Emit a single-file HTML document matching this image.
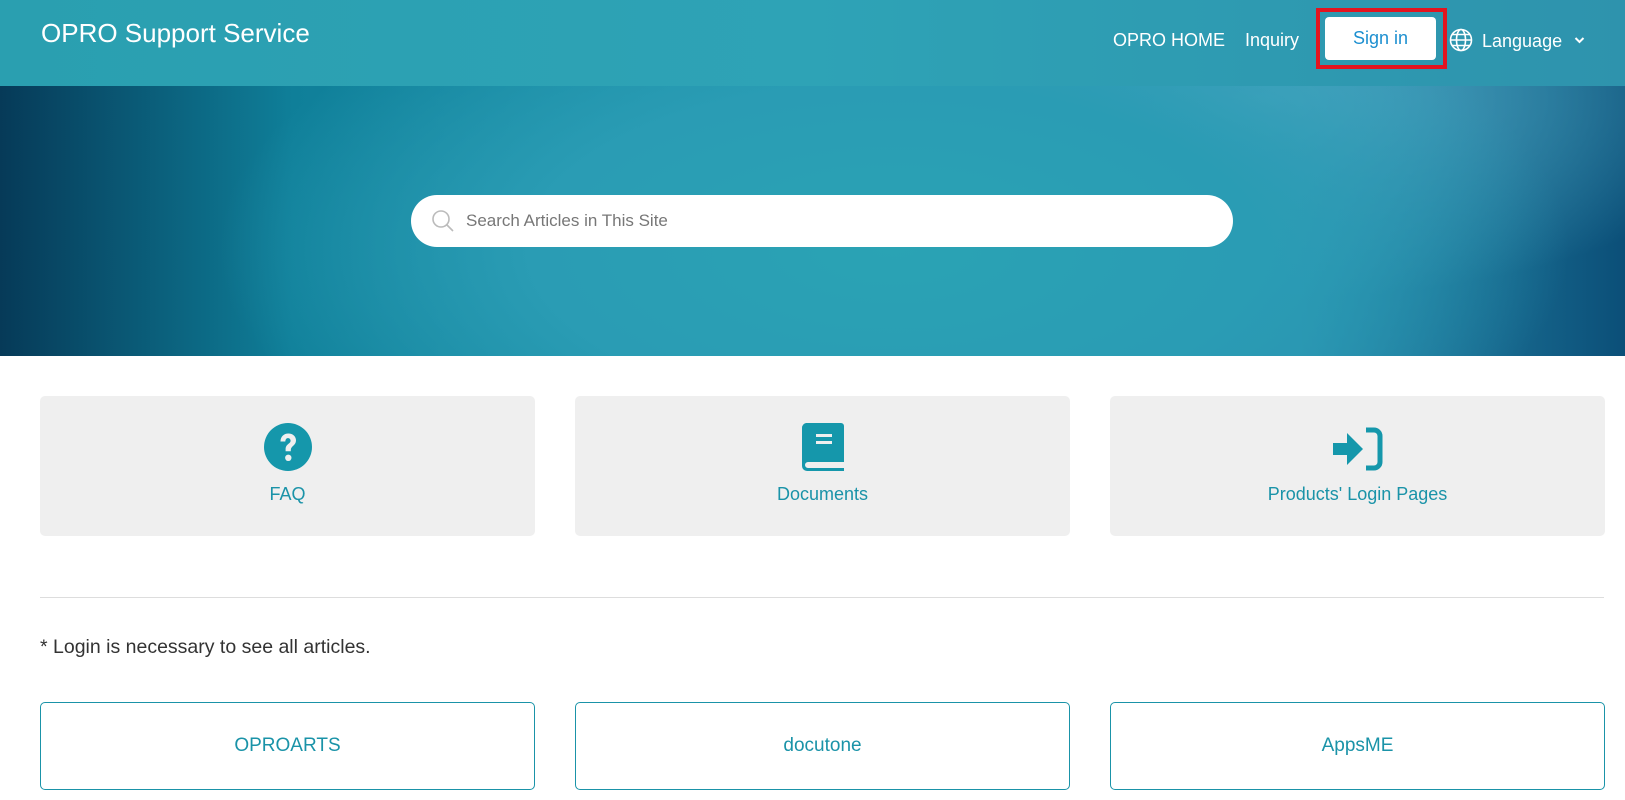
<!DOCTYPE html>
<html><head><meta charset="utf-8"><style>
*{margin:0;padding:0;box-sizing:border-box}
body{width:1625px;height:800px;overflow:hidden;font-family:"Liberation Sans",sans-serif;background:#fff;position:relative}
.hdr{position:absolute;left:0;top:0;width:1625px;height:86px;background:linear-gradient(90deg,#2a9fb0,#2ea3b6 50%,#2e93ad);}
.hero{position:absolute;left:0;top:86px;width:1625px;height:270px;background:radial-gradient(ellipse 900px 400px at 55% 60%,#2aa3b4 0%,#2a9cb4 40%,rgba(30,130,160,0) 75%),radial-gradient(ellipse 500px 200px at 78% 5%,#4aa4c0 0%,rgba(60,150,180,0) 100%),linear-gradient(90deg,#063a58 0%,#0f7f99 18%,#1f96ad 50%,#2a8fb0 80%,#0b4f78 100%);}
.t{position:absolute;color:#fff;white-space:nowrap}
.search{position:absolute;left:411px;top:195px;width:822px;height:52px;background:#fff;border-radius:26px}
.card{position:absolute;top:396px;width:495px;height:140px;background:#efefef;border-radius:5px;text-align:center;color:#1a93a8;font-size:18px}
.card svg{position:absolute;left:50%;top:26px;transform:translateX(-50%)}
.card span{position:absolute;left:0;right:0;top:88px}
.box{position:absolute;top:702px;width:495px;height:88px;border:1px solid #1a93a8;border-radius:5px;text-align:center;color:#1a93a8;font-size:19px;line-height:86px}
</style></head><body>
<div class="hdr"></div>
<div class="hero"></div>
<div class="t" style="left:41px;top:18px;font-size:26px">OPRO Support Service</div>
<div class="t" style="left:1113px;top:30px;font-size:18px">OPRO HOME</div>
<div class="t" style="left:1245px;top:30px;font-size:18px">Inquiry</div>
<div style="position:absolute;left:1316px;top:8px;width:131px;height:61px;border:4px solid #e3141f"></div>
<div style="position:absolute;left:1325px;top:17px;width:111px;height:43px;background:#fff;border-radius:4px;color:#1c8fd0;font-size:18px;text-align:center;line-height:43px">Sign in</div>
<svg style="position:absolute;left:1449px;top:28px" width="24" height="24" viewBox="0 0 24 24" fill="none" stroke="#fff" stroke-width="1.6"><circle cx="12" cy="12" r="10.5"/><ellipse cx="12" cy="12" rx="4.5" ry="10.5"/><path d="M1.5 12h21M3 6.5h18M3 17.5h18"/></svg>
<div class="t" style="left:1482px;top:31px;font-size:18px">Language</div>
<svg style="position:absolute;left:1574px;top:36px" width="11" height="8" viewBox="0 0 11 8"><path d="M1.5 2l4 4 4-4" stroke="#fff" stroke-width="2" fill="none"/></svg>
<div class="search"></div>
<svg style="position:absolute;left:431px;top:209px" width="24" height="24" viewBox="0 0 24 24" fill="none" stroke="#bbb" stroke-width="1.6"><circle cx="10" cy="10" r="8"/><path d="M16 16l6 6"/></svg>
<div style="position:absolute;left:466px;top:211px;font-size:17px;color:#777">Search Articles in This Site</div>
<div class="card" style="left:40px"><svg width="50" height="50" viewBox="0 0 50 50"><circle cx="25" cy="25" r="24" fill="#1597ab"/><path d="M17.5 19.5c0-5 3.5-8 7.8-8 4.6 0 7.7 3 7.7 7 0 5-5.2 5.4-5.2 9.5v1.2h-5.2v-1.8c0-5.5 5-5.5 5-8.6 0-1.6-1.1-2.7-2.6-2.7-1.7 0-2.5 1.2-2.7 3.4z" fill="#efefef"/><circle cx="25.3" cy="35.8" r="3.2" fill="#efefef"/></svg><span>FAQ</span></div>
<div class="card" style="left:575px"><svg width="46" height="50" viewBox="0 0 46 50"><path d="M6 1h35a3 3 0 0 1 3 3v36h-36a3 3 0 0 0 0 6h36v3h-37a5 5 0 0 1-5-5v-38a5 5 0 0 1 4-5z" fill="#1597ab"/><rect x="16" y="12" width="16" height="3" fill="#efefef"/><rect x="16" y="19" width="16" height="3" fill="#efefef"/></svg><span>Documents</span></div>
<div class="card" style="left:1110px"><svg width="52" height="46" viewBox="0 0 52 46" style="top:30px"><path d="M1 17h14v-10l16 16-16 16v-10h-14z" fill="#1597ab"/><path d="M34 4h8a6 6 0 0 1 6 6v26a6 6 0 0 1-6 6h-8" stroke="#1597ab" stroke-width="5" fill="none"/></svg><span>Products' Login Pages</span></div>
<div style="position:absolute;left:40px;top:597px;width:1564px;height:1px;background:#ddd"></div>
<div style="position:absolute;left:40px;top:636px;font-size:19.5px;color:#333">* Login is necessary to see all articles.</div>
<div class="box" style="left:40px">OPROARTS</div>
<div class="box" style="left:575px">docutone</div>
<div class="box" style="left:1110px">AppsME</div>
</body></html>
